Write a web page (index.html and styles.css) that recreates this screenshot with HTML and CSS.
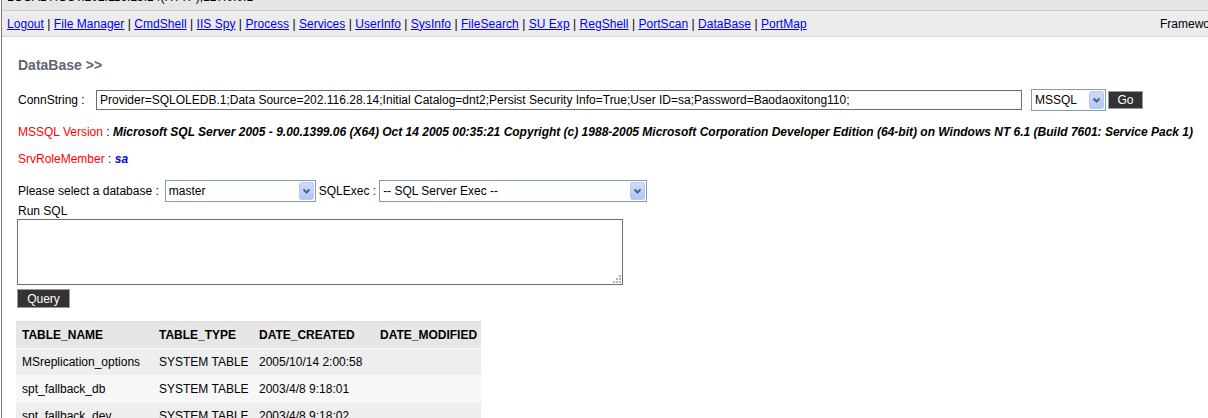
FILE: index.html
```html
<!DOCTYPE html>
<html>
<head>
<meta charset="utf-8">
<title>DataBase</title>
<link rel="stylesheet" href="styles.css">
</head>
<body>
<div class="page">
  <div class="topstrip"><div class="toptext">LOCAL HOST:202.116.28.14(HTTP),127.0.0.1</div></div>
  <div class="nav">
    <div class="links">
      <a href="#">Logout</a> | <a href="#">File Manager</a> | <a href="#">CmdShell</a> | <a href="#">IIS Spy</a> | <a href="#">Process</a> | <a href="#">Services</a> | <a href="#">UserInfo</a> | <a href="#">SysInfo</a> | <a href="#">FileSearch</a> | <a href="#">SU Exp</a> | <a href="#">RegShell</a> | <a href="#">PortScan</a> | <a href="#">DataBase</a> | <a href="#">PortMap</a>
    </div>
    <div class="framework">Framework Ver : 2.0.50727.8669</div>
  </div>

  <div class="content">
    <div class="title">DataBase &gt;&gt;</div>

    <div class="conn-row">
      <span class="conn-label">ConnString :</span>
      <div class="conn-input">Provider=SQLOLEDB.1;Data Source=202.116.28.14;Initial Catalog=dnt2;Persist Security Info=True;User ID=sa;Password=Baodaoxitong110;</div>
      <div class="select sel-type">
        <span class="sel-text">MSSQL</span>
        <svg class="sel-btn" width="15" height="18" viewBox="0 0 15 18"><defs><linearGradient id="g1" x1="0" y1="0" x2="0" y2="1"><stop offset="0" stop-color="#cfdcfd"/><stop offset="1" stop-color="#b1c5f6"/></linearGradient></defs><rect x="0.5" y="0.5" width="14" height="17" rx="2" fill="url(#g1)" stroke="#b9caf2"/><path d="M4.5 7.5 L7.5 10.5 L10.5 7.5" fill="none" stroke="#4d6185" stroke-width="2"/></svg>
      </div>
      <div class="btn btn-go">Go</div>
    </div>

    <div class="info"><span class="red">MSSQL Version</span> : <b><i>Microsoft SQL Server 2005 - 9.00.1399.06 (X64) Oct 14 2005 00:35:21 Copyright (c) 1988-2005 Microsoft Corporation Developer Edition (64-bit) on Windows NT 6.1 (Build 7601: Service Pack 1)</i></b></div>
    <div class="info info-role"><span class="red">SrvRoleMember</span> : <b><i class="blue">sa</i></b></div>

    <div class="db-row">
      <span>Please select a database :</span>
      <div class="select sel-db">
        <span class="sel-text">master</span>
        <svg class="sel-btn" width="15" height="18" viewBox="0 0 15 18"><defs><linearGradient id="g2" x1="0" y1="0" x2="0" y2="1"><stop offset="0" stop-color="#cfdcfd"/><stop offset="1" stop-color="#b1c5f6"/></linearGradient></defs><rect x="0.5" y="0.5" width="14" height="17" rx="2" fill="url(#g2)" stroke="#b9caf2"/><path d="M4.5 7.5 L7.5 10.5 L10.5 7.5" fill="none" stroke="#4d6185" stroke-width="2"/></svg>
      </div>
      <span class="exec-label">SQLExec :</span>
      <div class="select sel-exec">
        <span class="sel-text">-- SQL Server Exec --</span>
        <svg class="sel-btn" width="15" height="18" viewBox="0 0 15 18"><defs><linearGradient id="g3" x1="0" y1="0" x2="0" y2="1"><stop offset="0" stop-color="#cfdcfd"/><stop offset="1" stop-color="#b1c5f6"/></linearGradient></defs><rect x="0.5" y="0.5" width="14" height="17" rx="2" fill="url(#g3)" stroke="#b9caf2"/><path d="M4.5 7.5 L7.5 10.5 L10.5 7.5" fill="none" stroke="#4d6185" stroke-width="2"/></svg>
      </div>
    </div>

    <div class="runsql">Run SQL</div>
    <div class="sqlbox">
      <svg class="grip" width="9" height="9" viewBox="0 0 9 9"><g fill="#b4b4b4"><rect x="7" y="1" width="2" height="2"/><rect x="4" y="4" width="2" height="2"/><rect x="7" y="4" width="2" height="2"/><rect x="1" y="7" width="2" height="2"/><rect x="4" y="7" width="2" height="2"/><rect x="7" y="7" width="2" height="2"/></g></svg>
    </div>
    <div class="btn btn-query">Query</div>

    <table class="result">
      <colgroup><col class="c1"><col class="c2"><col class="c3"><col class="c4"></colgroup>
      <thead>
        <tr><th>TABLE_NAME</th><th>TABLE_TYPE</th><th>DATE_CREATED</th><th>DATE_MODIFIED</th></tr>
      </thead>
      <tbody>
        <tr><td>MSreplication_options</td><td>SYSTEM TABLE</td><td>2005/10/14 2:00:58</td><td></td></tr>
        <tr><td>spt_fallback_db</td><td>SYSTEM TABLE</td><td>2003/4/8 9:18:01</td><td></td></tr>
        <tr><td>spt_fallback_dev</td><td>SYSTEM TABLE</td><td>2003/4/8 9:18:02</td><td></td></tr>
        <tr><td>spt_fallback_usg</td><td>SYSTEM TABLE</td><td>2003/4/8 9:18:04</td><td></td></tr>
        <tr><td>spt_monitor</td><td>SYSTEM TABLE</td><td>2005/10/14 1:54:11</td><td></td></tr>
      </tbody>
    </table>
  </div>
</div>
</body>
</html>
```

FILE: styles.css
```css
html, body {
  margin: 0;
  padding: 0;
  background: #fff;
}
body {
  font-family: "Liberation Sans", Arial, sans-serif;
  font-size: 12px;
  color: #000;
}
.page {
  margin-left: 1px;
  border-left: 1px solid #7c7c7c;
  min-height: 418px;
  overflow: hidden;
}
.topstrip {
  height: 10px;
  background: #e6e6e6;
  border-bottom: 1px solid #cbcbcb;
  overflow: hidden;
}
.toptext {
  margin-top: -10px;
  margin-left: 5px;
  line-height: 14px;
  white-space: nowrap;
  color: #000;
}
.nav {
  display: grid;
  grid-template-columns: 1153px 1fr;
  align-items: center;
  height: 25px;
  padding-left: 5px;
  background: #ececec;
  border-bottom: 1px solid #d6d6d6;
}
.links {
  white-space: nowrap;
  line-height: 14px;
  letter-spacing: 0.04px;
}
.links a {
  color: #0000ff;
  text-decoration: underline;
}
.framework {
  white-space: nowrap;
  overflow: hidden;
  line-height: 14px;
}
.content {
  padding-left: 15px;
}
.title {
  margin-top: 20px;
  font-size: 14px;
  line-height: 16px;
  font-weight: bold;
  color: #5d6670;
  padding-left: 1px;
}
.conn-row {
  margin-top: 16px;
  display: flex;
  align-items: center;
  height: 22px;
}
.conn-label {
  width: 78px;
  padding-left: 1px;
  flex-shrink: 0;
}
.conn-input {
  box-sizing: border-box;
  width: 926px;
  height: 20px;
  border: 1px solid #6c6c6c;
  padding-left: 3px;
  line-height: 18px;
  white-space: nowrap;
  overflow: hidden;
  flex-shrink: 0;
}
.select {
  box-sizing: border-box;
  display: flex;
  align-items: center;
  height: 22px;
  border: 1px solid #7f9db9;
  background: #fff;
  flex-shrink: 0;
}
.sel-text {
  flex: 1;
  padding-left: 3px;
  white-space: nowrap;
  overflow: hidden;
}
.sel-btn {
  display: block;
  margin-right: 1px;
}
.sel-type {
  margin-left: 9px;
  width: 75px;
}
.btn {
  box-sizing: border-box;
  background: #333;
  color: #fff;
  border: 1px solid #9a9a9a;
  display: flex;
  align-items: center;
  justify-content: center;
  flex-shrink: 0;
}
.btn-go {
  margin-left: 2px;
  width: 35px;
  height: 18px;
}
.info {
  margin-top: 13px;
  line-height: 16px;
  padding-left: 1px;
  white-space: nowrap;
}
.info-role {
  margin-top: 11px;
}
.red {
  color: #ff0000;
}
.blue {
  color: #0000ff;
}
.db-row {
  margin-top: 13px;
  display: flex;
  align-items: center;
  height: 22px;
  padding-left: 1px;
}
.sel-db {
  margin-left: 6px;
  width: 151px;
}
.exec-label {
  margin-left: 3px;
}
.sel-exec {
  margin-left: 3px;
  width: 268px;
}
.runsql {
  margin-top: 2px;
  line-height: 14px;
  padding-left: 1px;
}
.sqlbox {
  position: relative;
  box-sizing: border-box;
  margin-top: 1px;
  width: 606px;
  height: 66px;
  border: 1px solid #6c6c6c;
  background: #fff;
}
.grip {
  position: absolute;
  right: 1px;
  bottom: 1px;
}
.btn-query {
  margin-top: 4px;
  width: 53px;
  height: 19px;
}
.result {
  margin-top: 13px;
  margin-left: -1px;
  border-collapse: collapse;
  table-layout: fixed;
  width: 465px;
}
.c1 { width: 137px; }
.c2 { width: 100px; }
.c3 { width: 121px; }
.c4 { width: 107px; }
.result th,
.result td {
  box-sizing: border-box;
  height: 27px;
  padding: 0 0 0 6px;
  text-align: left;
  white-space: nowrap;
  overflow: hidden;
  border-top: 1px solid #f9f9f9;
}
.result th {
  font-weight: bold;
  background: #e6e6e6;
  border-top: 1px solid #dcdcdc;
}
.result tbody tr:nth-child(odd) td {
  background: #eeeeee;
}
.result tbody tr:nth-child(even) td {
  background: #f7f7f7;
}
```
